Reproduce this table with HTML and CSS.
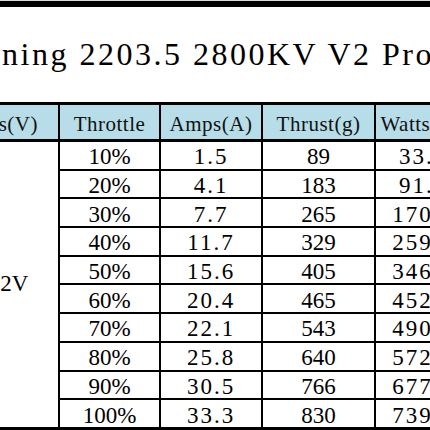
FILE: index.html
```html
<!DOCTYPE html>
<html>
<head>
<meta charset="utf-8">
<link rel="stylesheet" href="styles.css">
</head>
<body>
<div class="sheet">
  <div class="title">ning 2203.5 2800KV V2 Pro</div>
  <table class="grid">
    <colgroup>
      <col class="c-volt">
      <col class="c-thr">
      <col class="c-amp">
      <col class="c-thrust">
      <col class="c-watt">
    </colgroup>
    <thead>
      <tr>
        <th>Volts(V)</th>
        <th>Throttle</th>
        <th>Amps(A)</th>
        <th>Thrust(g)</th>
        <th>Watts(W)</th>
      </tr>
    </thead>
    <tbody>
      <tr><td class="volt" rowspan="10">22.2V</td><td>10%</td><td>1.5</td><td>89</td><td>33.3</td></tr>
      <tr><td>20%</td><td>4.1</td><td>183</td><td>91.0</td></tr>
      <tr><td>30%</td><td>7.7</td><td>265</td><td>170.9</td></tr>
      <tr><td>40%</td><td>11.7</td><td>329</td><td>259.7</td></tr>
      <tr><td>50%</td><td>15.6</td><td>405</td><td>346.3</td></tr>
      <tr><td>60%</td><td>20.4</td><td>465</td><td>452.9</td></tr>
      <tr><td>70%</td><td>22.1</td><td>543</td><td>490.6</td></tr>
      <tr><td>80%</td><td>25.8</td><td>640</td><td>572.8</td></tr>
      <tr><td>90%</td><td>30.5</td><td>766</td><td>677.1</td></tr>
      <tr><td>100%</td><td>33.3</td><td>830</td><td>739.3</td></tr>
    </tbody>
  </table>
</div>
</body>
</html>
```

FILE: styles.css
```css
html, body {
  margin: 0;
  padding: 0;
  background: #fff;
}
body {
  width: 430px;
  height: 430px;
  overflow: hidden;
  font-family: "Liberation Serif", "Times New Roman", serif;
  color: #000;
}
.sheet {
  margin-left: -60px;
  width: 540px;
  border-top: 1px solid #dcdcdc;
}
.title {
  border-top: 6px solid #000;
  height: 101px;
  box-sizing: border-box;
  padding: 31px 0 0 62px;
  font-size: 32px;
  line-height: 32px;
  letter-spacing: 2.5px;
  white-space: nowrap;
  overflow: hidden;
}
.grid {
  border-collapse: collapse;
  table-layout: fixed;
  width: 530px;
}
.c-volt { width: 118px; }
.c-thr { width: 101px; }
.c-amp { width: 102px; }
.c-thrust { width: 113px; }
.c-watt { width: 96px; }
.grid th {
  background: #b7dde8;
  border: 2px solid #000;
  border-top-width: 3px;
  border-bottom-width: 3px;
  height: 30px;
  padding: 4px 0 0;
  font-weight: normal;
  font-size: 21px;
  line-height: 24px;
  letter-spacing: 0.5px;
  color: #111;
  white-space: nowrap;
  overflow: hidden;
  text-align: center;
}
.grid tbody tr:last-child td {
  border-bottom-width: 4px;
}
.grid td {
  border: 2px solid #000;
  height: 22.7px;
  padding: 4px 0 0;
  font-size: 23px;
  line-height: 22px;
  text-align: center;
  white-space: nowrap;
  overflow: hidden;
}
.grid td:nth-last-child(1),
.grid td:nth-last-child(3) {
  letter-spacing: 2px;
}
.grid td.volt {
  padding: 0;
  letter-spacing: 0;
  vertical-align: middle;
  border-bottom-width: 4px;
}
```
